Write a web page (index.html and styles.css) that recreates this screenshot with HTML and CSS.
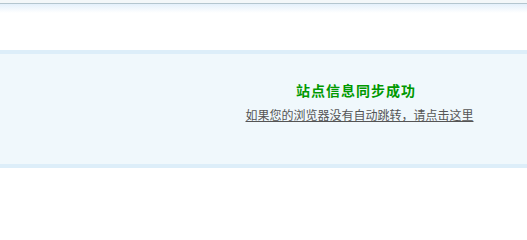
FILE: index.html
```html
<!DOCTYPE html>
<html lang="zh-CN">
<head>
<meta charset="utf-8">
<title>站点信息同步成功</title>
<link rel="stylesheet" href="styles.css">
</head>
<body>
<div class="topbar"></div>
<div class="msgbox">
  <div class="msg">
    <h3 class="title">站点信息同步成功</h3>
    <p class="tip"><a href="#">如果您的浏览器没有自动跳转，请点击这里</a></p>
  </div>
</div>
</body>
</html>
```
FILE: styles.css
```css
html, body {
  margin: 0;
  padding: 0;
  background: #ffffff;
  font-family: "Noto Sans CJK SC", "Liberation Sans", sans-serif;
}
.topbar {
  height: 50px;
  box-sizing: border-box;
  border-top: 3px solid #f3f7f9;
  background: linear-gradient(to bottom, #b4c6cf 0, #b4c6cf 1px, #e4f0fb 1px, #ffffff 10px, #ffffff 100%);
}
.msgbox {
  height: 118px;
  box-sizing: border-box;
  border-top: 4px solid #ddeef9;
  border-bottom: 4px solid #ddeef9;
  background: #f0f8fc;
  padding-left: 187px;
  padding-top: 26px;
}
.msg {
  text-align: center;
}
.title {
  margin: 0 0 0 -2px;
  font-size: 14px;
  line-height: 20px;
  letter-spacing: 1px;
  font-weight: bold;
  color: #009900;
}
.tip {
  margin: 7px 0 0 5px;
  font-size: 12px;
  line-height: 16px;
}
.tip a {
  color: #555555;
  text-decoration: underline;
}
```
